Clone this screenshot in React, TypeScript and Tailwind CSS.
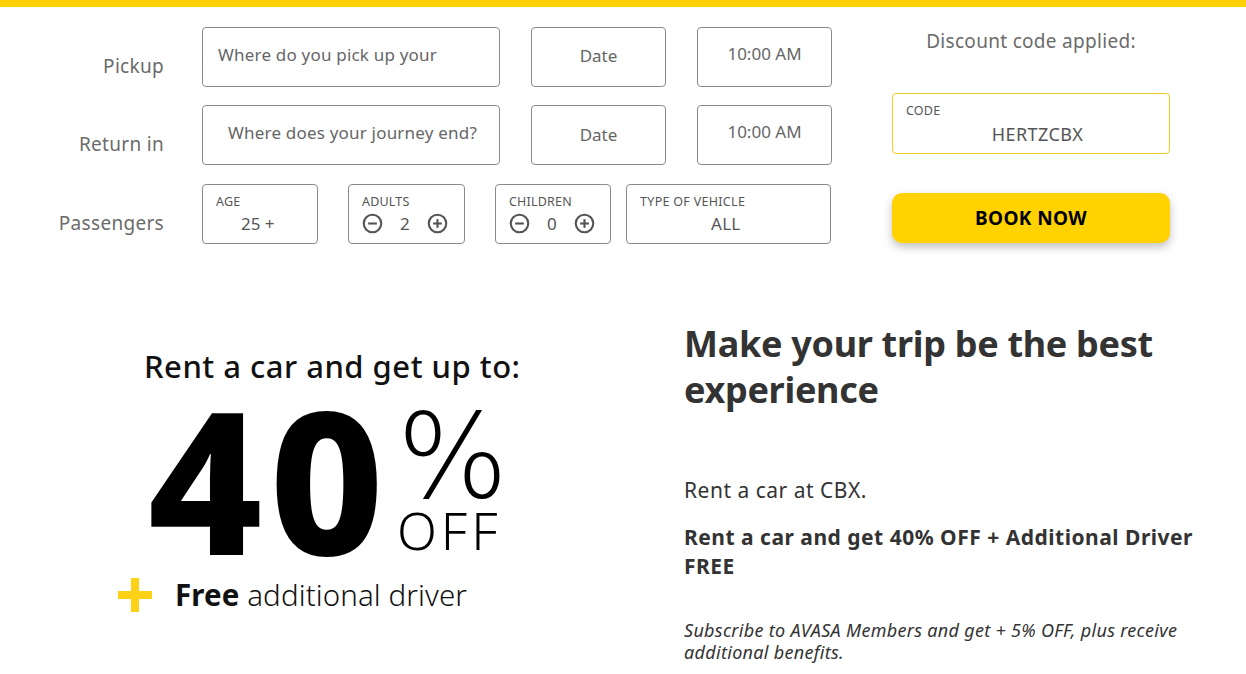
import React from "react";

const MinusCircle = () => (
  <svg width="21" height="21" viewBox="0 0 24 24" fill="none" stroke="#555" strokeWidth="2.4">
    <circle cx="12" cy="12" r="10" />
    <line x1="7" y1="12" x2="17" y2="12" />
  </svg>
);
const PlusCircle = () => (
  <svg width="21" height="21" viewBox="0 0 24 24" fill="none" stroke="#555" strokeWidth="2.4">
    <circle cx="12" cy="12" r="10" />
    <line x1="7" y1="12" x2="17" y2="12" />
    <line x1="12" y1="7" x2="12" y2="17" />
  </svg>
);

const Box = ({ className = "", children }: { className?: string; children: React.ReactNode }) => (
  <div className={`h-[60px] rounded-[4px] border border-[#8a8a8a] ${className}`}>{children}</div>
);

const Label = ({ children }: { children: React.ReactNode }) => (
  <div className="w-[164px] shrink-0 pt-[26px] text-right text-[19px] leading-[26px] tracking-[0.3px] text-[#6b6b6b]">{children}</div>
);

const Counter = ({ label, value }: { label: string; value: string }) => (
  <>
    <div className="text-[12.5px] leading-[16px] tracking-[0.2px]">{label}</div>
    <div className="mt-[3px] flex items-center gap-[17px]">
      <MinusCircle />
      <span className="text-[17px] leading-[20px]">{value}</span>
      <PlusCircle />
    </div>
  </>
);

export default function App() {
  return (
    <div className="min-h-[674px] w-[1246px] bg-white" style={{ fontFamily: '"Noto Sans", Lato, sans-serif' }}>
      <div className="h-[7px] bg-[#ffd200]" />
      {/* booking form */}
      <div className="flex h-[273px]">
        <div className="flex flex-col pt-[20px]">
          <div className="flex">
            <Label>Pickup</Label>
            <div className="ml-[38px] flex gap-[31px]">
              <Box className="flex w-[298px] items-center pb-[5px] pl-[15px] text-[17px] tracking-[0.2px] text-[#666]">Where do you pick up your</Box>
              <Box className="flex w-[135px] items-center justify-center pb-[3px] text-[17px] text-[#666]">Date</Box>
              <Box className="flex w-[135px] items-center justify-center pb-[6px] text-[17px] text-[#666]">10:00 AM</Box>
            </div>
          </div>
          <div className="mt-[18px] flex">
            <Label>Return in</Label>
            <div className="ml-[38px] flex gap-[31px]">
              <Box className="flex w-[298px] items-center pb-[5px] pl-[25px] text-[17px] tracking-[0.2px] text-[#666]">Where does your journey end?</Box>
              <Box className="flex w-[135px] items-center justify-center pb-[1px] text-[17px] text-[#666]">Date</Box>
              <Box className="flex w-[135px] items-center justify-center pb-[6px] text-[17px] text-[#666]">10:00 AM</Box>
            </div>
          </div>
          <div className="mt-[19px] flex">
            <Label>Passengers</Label>
            <div className="ml-[38px] flex">
              <Box className="w-[116px] pl-[13px] pt-[9px] text-[#555]">
                <div className="text-[12.5px] leading-[16px] tracking-[0.2px]">AGE</div>
                <div className="pl-[25px] pt-[4px] text-[17px] leading-[20px] text-[#555]">25 +</div>
              </Box>
              <Box className="ml-[30px] w-[117px] pl-[13px] pt-[9px] text-[#555]">
                <Counter label="ADULTS" value="2" />
              </Box>
              <Box className="ml-[30px] w-[116px] pl-[13px] pt-[9px] text-[#555]">
                <Counter label="CHILDREN" value="0" />
              </Box>
              <Box className="ml-[15px] w-[205px] pl-[13px] pt-[9px] text-[#555]">
                <div className="text-[12.5px] leading-[16px] tracking-[0.3px]">TYPE OF VEHICLE</div>
                <div className="pl-[71px] pt-[4px] text-[17px] leading-[20px] tracking-[0.3px]">ALL</div>
              </Box>
            </div>
          </div>
        </div>
        <div className="ml-[60px] flex w-[278px] flex-col">
          <div className="pt-[21px] text-center text-[19px] leading-[26px] tracking-[0.3px] text-[#6b6b6b]">Discount code applied:</div>
          <div className="mt-[39px] h-[61px] rounded-[4px] border border-[#f2cd1f] pl-[13px] pt-[9px] text-[#555]">
            <div className="text-[12.5px] leading-[16px] tracking-[0.2px]">CODE</div>
            <div className="pt-[4px] text-center text-[18px] leading-[22px] tracking-[0.4px]">HERTZCBX</div>
          </div>
          <button className="mt-[39px] h-[50px] rounded-[10px] bg-[#ffd200] text-[19px] font-bold tracking-[0.4px] text-black shadow-[0_4px_10px_rgba(0,0,0,0.25)]">
            BOOK NOW
          </button>
        </div>
      </div>

      {/* promo */}
      <div className="flex">
        <div className="flex w-[650px] flex-col items-start">
          <div className="ml-[144px] mt-[66px] text-[31px] font-medium leading-[40px] tracking-[0.5px] text-[#111]">Rent a car and get up to:</div>
          <div className="ml-[148px] mt-[12px] flex items-start">
            <div className="text-[198px] font-extrabold leading-[160px] tracking-[7px] text-black">40</div>
            <div className="ml-[6px] mt-[14px] flex flex-col">
              <div className="text-[117px] font-extralight leading-[90px] text-black" style={{ fontFamily: '"DejaVu Sans", sans-serif' }}>%</div>
              <div className="mt-[5px] text-[52px] font-light leading-[46px] tracking-[4px] text-black">OFF</div>
            </div>
          </div>
          <div className="ml-[118px] mt-[19px] flex h-[36px] items-center">
            <div className="relative h-[34px] w-[34px]">
              <div className="absolute left-0 top-[13px] h-[8px] w-[34px] bg-[#fcd116]" />
              <div className="absolute left-[13px] top-0 h-[34px] w-[8px] bg-[#fcd116]" />
            </div>
            <div className="ml-[23px] text-[29.5px] leading-[36px] tracking-[0.1px] text-[#111]">
              <span className="font-bold">Free</span> <span className="font-light">additional driver</span>
            </div>
          </div>
        </div>
        <div className="ml-[34px] w-[530px] pt-[41px] text-[#333]">
          <h1 className="text-[36px] font-bold leading-[46px] tracking-[-0.3px]">Make your trip be the best experience</h1>
          <p className="mt-[63px] text-[21px] leading-[28px] tracking-[0.5px]">Rent a car at CBX.</p>
          <p className="mt-[19px] w-[525px] text-[21px] font-bold leading-[29px] tracking-[0.5px]">Rent a car and get 40% OFF + Additional Driver FREE</p>
          <p className="mt-[38px] text-[18px] italic leading-[22px] tracking-[0.3px]">Subscribe to AVASA Members and get + 5% OFF, plus receive additional benefits.</p>
        </div>
      </div>
    </div>
  );
}
